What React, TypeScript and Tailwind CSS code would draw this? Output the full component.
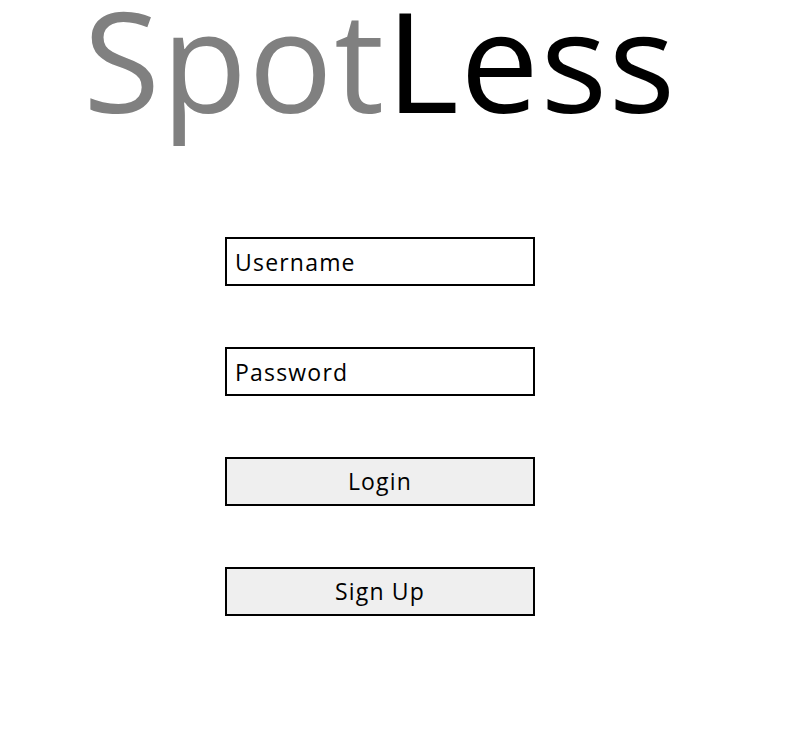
export default function App() {
  return (
    <div className="min-h-[742px] bg-white font-['Open_Sans',sans-serif]">
      <div className="flex w-[760px] flex-col items-center">
        <h1 className="text-[140px] leading-[117px] font-normal tracking-[1.5px]">
          <span className="text-[#808080]">Spot</span>
          <span className="text-black">Less</span>
        </h1>
        <div className="mt-[120px] flex flex-col gap-[61px]">
          <input
            className="h-[49px] w-[310px] border-2 border-black px-2 text-[23px] tracking-[1.2px] text-black placeholder:text-black outline-none"
            placeholder="Username"
          />
          <input
            type="password"
            className="h-[49px] w-[310px] border-2 border-black px-2 text-[23px] tracking-[1.2px] text-black placeholder:text-black outline-none"
            placeholder="Password"
          />
          <button className="h-[49px] w-[310px] border-2 border-black bg-[#efefef] text-[23px] tracking-[1.2px] text-black">
            Login
          </button>
          <button className="h-[49px] w-[310px] border-2 border-black bg-[#efefef] text-[23px] tracking-[1.2px] text-black">
            Sign Up
          </button>
        </div>
      </div>
    </div>
  );
}
